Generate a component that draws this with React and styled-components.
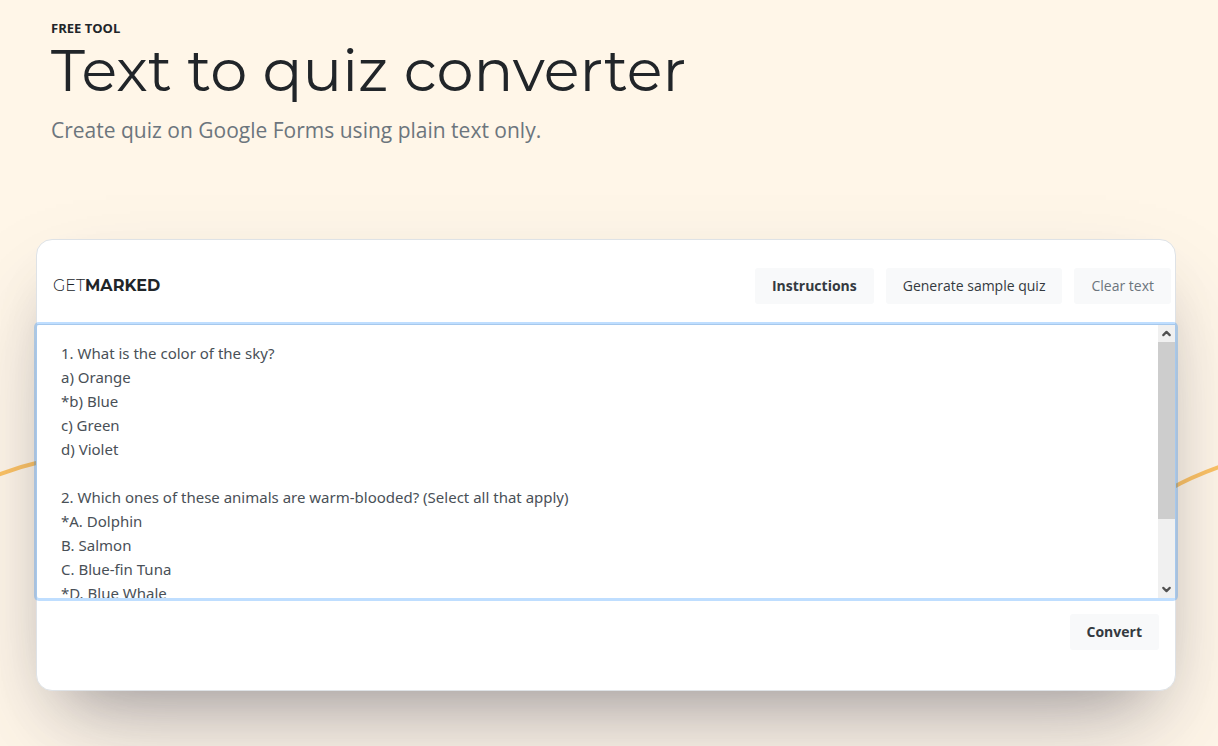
import React, { useEffect, useRef, useState } from 'react';
import styled, { createGlobalStyle } from 'styled-components';
import { ChevronDown, ChevronUp } from 'lucide-react';

const GlobalStyle = createGlobalStyle`
  * {
    box-sizing: border-box;
  }
  body {
    margin: 0;
    background: #fff6e8;
    color: #212529;
    font-family: 'Open Sans', sans-serif;
  }
`;

const Page = styled.main`
  position: relative;
  min-height: 100vh;
  padding: 18px 42px 55px 36px;
  overflow: hidden;
`;

const Wave = styled.svg`
  position: absolute;
  top: 0;
  left: 0;
  width: 100%;
  height: 746px;
`;

const Hero = styled.header`
  position: relative;
  padding: 0 15px;
  margin-bottom: 93px;
`;

const Eyebrow = styled.p`
  margin: 0;
  font-size: 13px;
  font-weight: 700;
  line-height: 20px;
  text-transform: uppercase;
`;

const Title = styled.h1`
  margin: 0 0 12px;
  font-family: Montserrat, Inter, sans-serif;
  font-size: 59px;
  font-weight: 400;
  line-height: 64px;
`;

const Lead = styled.p`
  margin: 0;
  color: #6c757d;
  font-size: 21px;
  line-height: 32px;
`;

const Card = styled.section`
  position: relative;
  background: #fff;
  border: 1px solid #dee2e6;
  border-radius: 16px;
  box-shadow: 0 50px 100px -20px rgba(50, 50, 93, 0.25), 0 30px 60px -30px rgba(0, 0, 0, 0.3);
`;

const CardHeader = styled.div`
  display: flex;
  align-items: center;
  justify-content: space-between;
  padding: 28px 4px 20px 16px;
  border-bottom: 1px solid #dee2e6;
`;

const Brand = styled.span`
  font-family: Montserrat, Inter, sans-serif;
  font-size: 16px;
  font-weight: 300;
  line-height: 24px;

  b {
    font-weight: 700;
  }
`;

const Actions = styled.div`
  display: flex;
  gap: 12px;
`;

const Button = styled.button`
  height: 36px;
  padding: 0 17px 1px;
  border: 0;
  border-radius: 3px;
  background: #f8f9fa;
  color: ${(props) => (props.$muted ? '#6c757d' : '#343a40')};
  font-family: inherit;
  font-size: 14px;
  font-weight: ${(props) => (props.$bold ? 700 : 400)};
  cursor: pointer;
`;

const Editor = styled.div`
  position: relative;
  display: flex;
  height: 273px;
  border-radius: 2px;
  background: #fff;
  box-shadow: 0 0 0 3px rgba(0, 123, 255, 0.25);
`;

const TextArea = styled.textarea`
  flex: 1;
  min-width: 0;
  padding: 16px 24px;
  border: 0;
  outline: 0;
  resize: none;
  background: transparent;
  color: #495057;
  font-family: 'Segoe UI', 'Noto Sans', sans-serif;
  font-size: 15px;
  line-height: 24px;
  scrollbar-width: none;
`;

const ScrollBar = styled.div`
  display: flex;
  flex-direction: column;
  width: 17px;
  background: #f0f0f0;
`;

const ScrollButton = styled.button`
  display: flex;
  align-items: center;
  justify-content: center;
  height: 17px;
  padding: 0;
  border: 0;
  background: transparent;
  color: #505050;
`;

const Track = styled.div`
  flex: 1;
`;

const Thumb = styled.div`
  background: #cdcdcd;
`;

const CardFooter = styled.div`
  display: flex;
  justify-content: flex-end;
  padding: 16px 16px 40px;
`;

const sampleQuiz = `1. What is the color of the sky?
a) Orange
*b) Blue
c) Green
d) Violet

2. Which ones of these animals are warm-blooded? (Select all that apply)
*A. Dolphin
B. Salmon
C. Blue-fin Tuna
*D. Blue Whale


`;

function QuizEditor({ value, onChange }) {
  const area = useRef(null);
  const [thumb, setThumb] = useState({ top: 0, size: 100 });

  function measure() {
    const el = area.current;
    setThumb({
      top: (el.scrollTop / el.scrollHeight) * 100,
      size: (el.clientHeight / el.scrollHeight) * 100,
    });
  }

  useEffect(() => {
    measure();
  }, [value]);

  return (
    <Editor>
      <TextArea
        ref={area}
        aria-label="Quiz text"
        spellCheck={false}
        value={value}
        onChange={(e) => onChange(e.target.value)}
        onScroll={measure}
      />
      <ScrollBar>
        <ScrollButton aria-label="Scroll up" onClick={() => area.current.scrollBy(0, -24)}>
          <ChevronUp size={13} strokeWidth={4} />
        </ScrollButton>
        <Track>
          <div style={{ height: `${thumb.top}%` }} />
          <Thumb style={{ height: `${thumb.size}%` }} />
        </Track>
        <ScrollButton aria-label="Scroll down" onClick={() => area.current.scrollBy(0, 24)}>
          <ChevronDown size={13} strokeWidth={4} />
        </ScrollButton>
      </ScrollBar>
    </Editor>
  );
}

function App() {
  const [text, setText] = useState(sampleQuiz);

  return (
    <>
      <GlobalStyle />
      <Page>
        <Wave viewBox="0 0 1218 746" preserveAspectRatio="none" aria-hidden="true">
          <path
            d="M-10 478 Q14 468 40 462 C300 410 420 640 700 640 C940 640 1040 548 1170 489 Q1195 475 1228 464"
            fill="none"
            stroke="#fdc364"
            strokeWidth="4"
          />
        </Wave>
        <Hero>
          <Eyebrow>Free tool</Eyebrow>
          <Title>Text to quiz converter</Title>
          <Lead>Create quiz on Google Forms using plain text only.</Lead>
        </Hero>
        <Card>
          <CardHeader>
            <Brand>
              GET<b>MARKED</b>
            </Brand>
            <Actions>
              <Button $bold>Instructions</Button>
              <Button onClick={() => setText(sampleQuiz)}>Generate sample quiz</Button>
              <Button $muted onClick={() => setText('')}>
                Clear text
              </Button>
            </Actions>
          </CardHeader>
          <QuizEditor value={text} onChange={setText} />
          <CardFooter>
            <Button $bold>Convert</Button>
          </CardFooter>
        </Card>
      </Page>
    </>
  );
}

export default App;
